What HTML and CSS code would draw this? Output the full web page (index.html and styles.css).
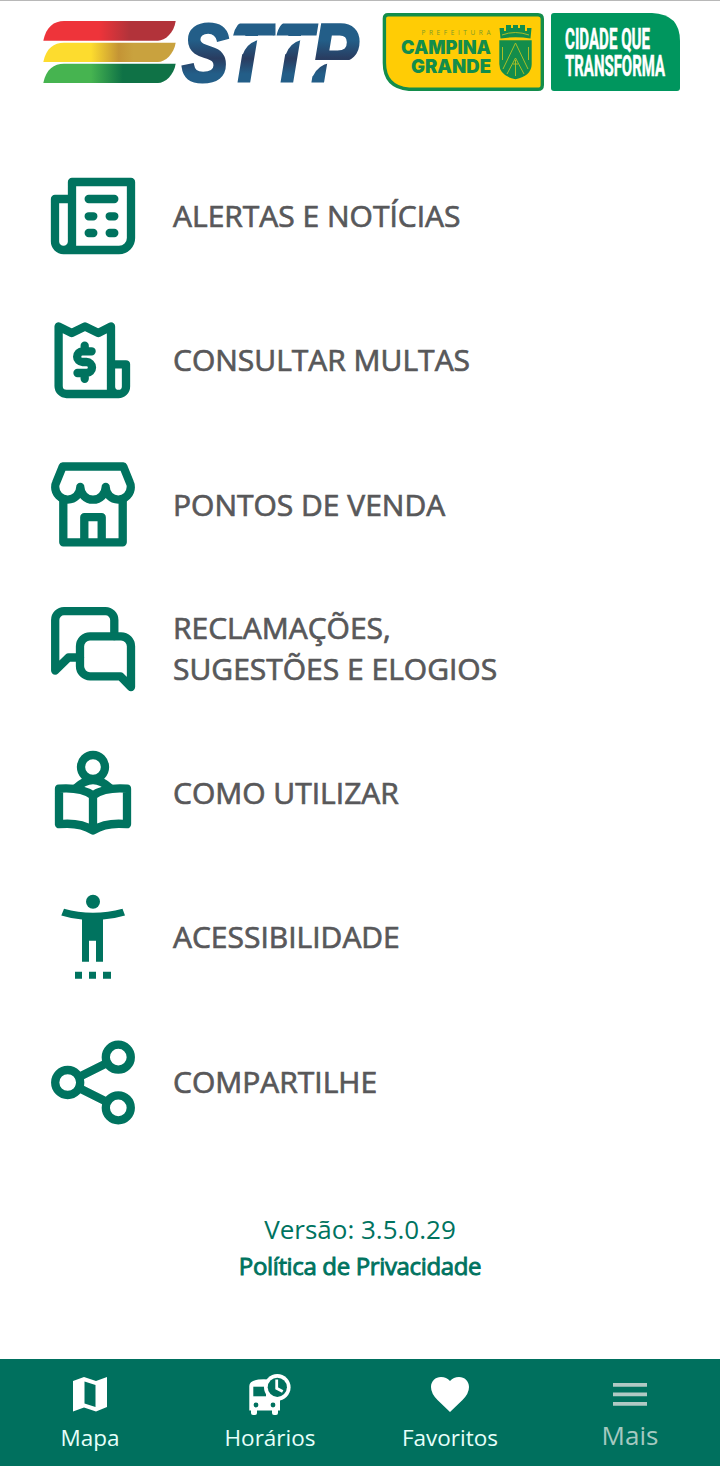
FILE: index.html
```html
<!DOCTYPE html>
<html lang="pt-BR">
<head>
    <meta charset="UTF-8">
    <meta name="viewport" content="width=device-width, initial-scale=1.0">
    <title>STTP - Mais</title>
    <link rel="stylesheet" href="styles.css">
</head>
<body>
    <header class="header">
        <svg class="logo-sttp" viewBox="0 0 324 72" role="img" aria-label="STTP">
            <defs>
                <linearGradient id="red"><stop offset=".42" stop-color="#ee343a"/><stop offset=".65" stop-color="#b2333a"/></linearGradient>
                <linearGradient id="yellow"><stop offset=".36" stop-color="#fddc2e"/><stop offset=".57" stop-color="#c49435"/><stop offset=".68" stop-color="#c9a23e"/></linearGradient>
                <linearGradient id="green"><stop offset=".36" stop-color="#46b450"/><stop offset=".6" stop-color="#0f7246"/></linearGradient>
                <linearGradient id="blue" gradientUnits="userSpaceOnUse" x1="0" y1="6" x2="0" y2="67">
                    <stop offset=".3" stop-color="#235e88"/><stop offset=".6" stop-color="#293c60"/><stop offset=".85" stop-color="#235e88"/>
                </linearGradient>
            </defs>
            <path fill="url(#red)" d="M3.3 24.7C6 11 14 5 24 5H135.7C134 17 125 24.7 118 24.7Z"/>
            <path fill="url(#yellow)" d="M3.3 46C6 32 14 26.7 24 26.7H135.7C134 38 125 46 118 46Z"/>
            <path fill="url(#green)" d="M3.3 67C6 53 14 47.7 24 47.7H135.7C134 59 125 67 118 67Z"/>
            <text class="sttp-text" transform="scale(.86 1)" x="165 217 267 316" y="64.5">STTP</text>
            <!-- stencil cuts -->
            <path fill="#fff" d="M190 20H272L271 24H261Q250 27 246 38L240 40V24H218Q207 27 203 38L197 40V24H190ZM265 44H317V47H290Q278 49 273 60L262 64ZM190 22V4H206Q196 6 193 20ZM235.5 20V4H250Q239 6 236.5 20Z"/>
        </svg>
        <svg class="logo-city" viewBox="0 0 304 84" role="img" aria-label="Prefeitura Campina Grande">
            <path fill="#ffcc05" stroke="#138d4b" stroke-width="3.4" d="M8 4.7H158Q162.3 4.7 162.3 9V75Q162.3 79.3 158 79.3H29Q4.4 77 4.4 53V8.5Q4.4 4.7 8 4.7Z"/>
            <path fill="#00965e" d="M174 3H272Q300 4 300 31V78Q300 81 297 81H174Q171 81 171 78V6Q171 3 174 3Z"/>
            <text class="city-small" x="41.5" y="25.2" textLength="69">PREFEITURA</text>
            <text class="city-name" x="21" y="44" textLength="90" lengthAdjust="spacingAndGlyphs">CAMPINA</text>
            <text class="city-name" x="31" y="62.7" textLength="80" lengthAdjust="spacingAndGlyphs">GRANDE</text>
            <g fill="#138d4b">
                <path d="M119.500 18H124V21H126V15H131V18H133V15H138V18H140V15H145V21H147V18H151.500L150.500 28.500Q135.500 26 120.500 28.500Z"/>
                <path d="M119.300 30.300H151.700V54Q151.500 66 135.500 69.300Q119.500 66 119.300 54Z"/>
            </g>
            <path class="crest-lines" d="M122 25Q135 20 149 25M135.500 33L123 59M135.500 33L148 59M135.500 48L127 64M135.500 48L144 64M135.500 50V66M133 54H138M122.500 37V50M148.500 37V50"/>
            <text class="slogan" x="185" y="38.7" textLength="85" lengthAdjust="spacingAndGlyphs">CIDADE QUE</text>
            <text class="slogan" x="185" y="66.3" textLength="100" lengthAdjust="spacingAndGlyphs">TRANSFORMA</text>
        </svg>
    </header>

    <main class="menu">
        <a class="menu-item">
            <svg class="icon" viewBox="0 0 100 100">
                <path d="M29 83V16H88V72a12 12 0 0 1-12 12H20.500a8.500 8.500 0 0 1-8.500-8.500V33H29M29 75.500a8.500 8.500 0 0 1-8.500 8.500"/>
                <path d="M45.700 33H71.300M45.700 50.300H50.300M66.700 50.300H71.300M45.700 67H50.300M66.700 67H71.300"/>
            </svg>
            <span>ALERTAS E NOTÍCIAS</span>
        </a>
        <a class="menu-item">
            <svg class="icon" viewBox="0 0 100 100">
                <path d="M68 83V16.500L55.300 23L42 16.500L28.700 23L15.600 16.500V76a8 8 0 0 0 8 8H75.500a7.500 7.500 0 0 0 7.500-7.500V54.300H68M68 76.500a7.500 7.500 0 0 0 7.500 7.500"/>
                <path d="M48.600 41.300H39.500a5.300 5.300 0 0 0 0 10.700H43.500a5.500 5.500 0 0 1 0 11H34.500M41.700 35.700V41M41.700 63V68.800"/>
            </svg>
            <span>CONSULTAR MULTAS</span>
        </a>
        <a class="menu-item">
            <svg class="icon" viewBox="0 0 100 100">
                <path d="M12.200 32Q12 30 13 28L19.700 11.500H80.300L87 28Q88 30 87.800 32a12.500 12.500 0 0 1-25.100 0a12.600 12.600 0 0 1-25.400 0a12.500 12.500 0 0 1-25.100 0Z"/>
                <path d="M20.300 45V87.300H79.700V45M41.300 87V62.200H58.700V87"/>
            </svg>
            <span>PONTOS DE VENDA</span>
        </a>
        <a class="menu-item">
            <svg class="icon" viewBox="0 0 100 100">
                <path d="M71.300 37V21a8.800 8.800 0 0 0-8.800-8.800H21a8.800 8.800 0 0 0-8.800 8.800V71.500L25.500 58.500H37"/>
                <path d="M88 88L77.500 77.300H47a10 10 0 0 1-10-10V47.300a10 10 0 0 1 10-10H78a10 10 0 0 1 10 10Z"/>
            </svg>
            <span>RECLAMAÇÕES,<br>SUGESTÕES E ELOGIOS</span>
        </a>
        <a class="menu-item">
            <svg class="icon" viewBox="0 0 100 100">
                <circle cx="50" cy="24" r="12"/>
                <path d="M33 45Q50 29 67 45"/>
                <path d="M16 45.700Q38 44 50 52.500Q62 44 84 45.700V81.200Q63 79 50 87.500Q37 79 16 81.200ZM50 53V87"/>
            </svg>
            <span>COMO UTILIZAR</span>
        </a>
        <a class="menu-item">
            <svg class="icon icon-solid" viewBox="0 0 100 100">
                <circle cx="50" cy="14.700" r="7"/>
                <path d="M21 21.700Q35 25.700 50 25.700Q65 25.700 79.500 21.700L82 28.400Q71 31.700 60 32.500V74.700H53V53.700H46V74.700H39V32.500Q29 31.700 18.300 28.400ZM32 84.700H39V91.700H32ZM46 84.700H53V91.700H46ZM60 84.700H68V91.700H60Z"/>
            </svg>
            <span>ACESSIBILIDADE</span>
        </a>
        <a class="menu-item">
            <svg class="icon" viewBox="0 0 100 100">
                <path d="M36 45L64 31M36 56L64 70"/>
                <circle cx="24.700" cy="50.500" r="12.500"/>
                <circle cx="75.300" cy="25.200" r="12.500"/>
                <circle cx="75.300" cy="75.800" r="12.500"/>
            </svg>
            <span>COMPARTILHE</span>
        </a>
    </main>

    <footer class="about">
        <p class="version">Versão: 3.5.0.29</p>
        <a class="privacy">Política de Privacidade</a>
    </footer>

    <nav class="tabs">
        <a class="tab">
            <svg class="tab-icon" viewBox="0 0 44 44">
                <path fill-rule="evenodd" d="M5 9L16 5L28 9L39 5V35L28 39.500L16 35.500L5 39.500ZM16.500 9.500V31.500L27.500 35V13Z"/>
            </svg>
            <span>Mapa</span>
        </a>
        <a class="tab">
            <svg class="tab-icon" viewBox="0 0 44 44">
                <path d="M1.300 14Q1.300 7.300 16 7.300Q32 7.300 32 14V38.500H30V41Q30 43 28 43H26Q24 43 24 41V38.500H9V41Q9 43 7 43H5Q3 43 3 41V38.500H1.300Z"/>
                <path class="cut" d="M5.300 14.700H18V24.300H5.300Z"/>
                <circle class="cut" cx="8" cy="33" r="2.400"/>
                <circle class="cut" cx="25" cy="33" r="2.400"/>
                <circle cx="29.300" cy="15.300" r="13.300"/>
                <circle class="cut" cx="29.300" cy="15.300" r="9.600"/>
                <path class="hands" d="M28.700 7.500V16.300L34.700 19.500"/>
            </svg>
            <span>Horários</span>
        </a>
        <a class="tab">
            <svg class="tab-icon" viewBox="0 0 44 44">
                <path d="M22 40L9.500 28Q3 21.500 3 15C3 9 7.500 5 13 5Q18.500 5 22 9Q25.500 5 31 5C36.500 5 41 9 41 15Q41 21.500 34.500 28Z"/>
            </svg>
            <span>Favoritos</span>
        </a>
        <a class="tab active">
            <svg class="tab-icon" viewBox="0 0 44 44">
                <path d="M5 11H39V14.800H5ZM5 20.500H39V24.300H5ZM5 30H39V33.800H5Z"/>
            </svg>
            <span>Mais</span>
        </a>
    </nav>
</body>
</html>
```

FILE: styles.css
```css
* {
    box-sizing: border-box;
}
body {
    display: flex;
    flex-direction: column;
    height: 1466px;
    margin: 0;
    background: #fff;
    font-family: "Open Sans", "Noto Sans", sans-serif;
}
.header {
    display: flex;
    align-items: flex-start;
    gap: 16px;
    height: 144px;
    padding: 9px 0 0 40px;
    border-top: 1px solid #b8b8b8;
}
.logo-sttp {
    width: 324px;
    height: 72px;
    margin-top: 6px;
    overflow: visible;
}
.logo-city {
    width: 304px;
    height: 84px;
    overflow: visible;
}
.sttp-text {
    fill: url(#blue);
    stroke: url(#blue);
    stroke-width: 3px;
    font: italic bold 81px "Liberation Sans", Arial, sans-serif;
}
.city-small {
    fill: #7a9a2b;
    font: 6.5px "Open Sans", sans-serif;
}
.city-name {
    fill: #138d4b;
    font: 900 18.5px Inter, sans-serif;
}
.crest-lines {
    fill: none;
    stroke: #a9bd28;
    stroke-width: 1;
}
.slogan {
    fill: #fff;
    stroke: #fff;
    stroke-width: 0.5px;
    font: bold 29px Roboto, sans-serif;
}
.menu-item {
    display: flex;
    align-items: center;
    gap: 30px;
    height: 144.25px;
    padding-left: 43px;
    color: #58585a;
    font-size: 30px;
    line-height: 41px;
    -webkit-text-stroke: 0.7px #58585a;
}
.menu-item span {
    padding-bottom: 0.8px;
}
.icon {
    width: 100px;
    height: 100px;
    fill: none;
    stroke: #00735f;
    stroke-width: 8.3;
    stroke-linecap: round;
    stroke-linejoin: round;
}
.icon-solid {
    fill: #00735f;
    stroke: none;
}
.about {
    flex: 1;
    padding-top: 57px;
    color: #00735f;
    text-align: center;
}
.version {
    margin: 0;
    font-size: 26px;
    line-height: 37px;
}
.privacy {
    display: block;
    font-size: 24px;
    line-height: 36px;
    letter-spacing: -0.35px;
    -webkit-text-stroke: 0.9px #00735f;
}
.tabs {
    display: flex;
    height: 107px;
    background: #00705e;
}
.tab {
    display: flex;
    flex: 1;
    flex-direction: column;
    align-items: center;
    padding-top: 13px;
    color: #e6fffa;
    font-size: 22.5px;
    line-height: 30px;
}
.tab span {
    margin-top: 7px;
}
.tab-icon {
    width: 44px;
    height: 44px;
    fill: #fff;
}
.cut {
    fill: #00705e;
}
.hands {
    fill: none;
    stroke: #fff;
    stroke-width: 2.8;
}
.tab.active {
    color: #a5c9c0;
    font-size: 26px;
}
.tab.active span {
    margin-top: 4px;
}
.tab.active .tab-icon {
    fill: #b0c9c4;
}
```
